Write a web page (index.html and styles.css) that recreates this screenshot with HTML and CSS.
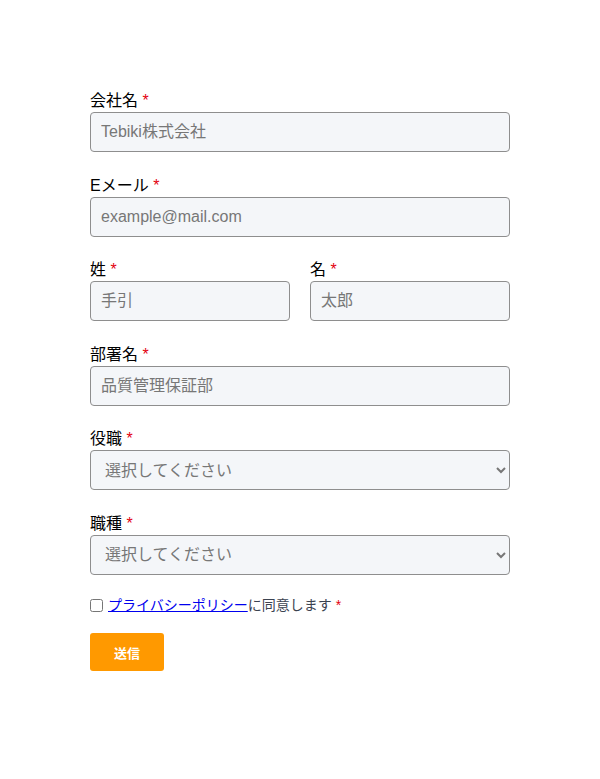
FILE: index.html
```html
<!DOCTYPE html>
<html lang="ja">
<head>
<meta charset="utf-8">
<title>フォーム</title>
<link rel="stylesheet" href="styles.css">
</head>
<body>
<form class="form">
  <div class="group">
    <label class="label">会社名 <span class="req">*</span></label>
    <input class="input" type="text" placeholder="Tebiki株式会社">
  </div>
  <div class="group">
    <label class="label">Eメール <span class="req">*</span></label>
    <input class="input" type="email" placeholder="example@mail.com">
  </div>
  <div class="row">
    <div class="group">
      <label class="label">姓 <span class="req">*</span></label>
      <input class="input" type="text" placeholder="手引">
    </div>
    <div class="group">
      <label class="label">名 <span class="req">*</span></label>
      <input class="input" type="text" placeholder="太郎">
    </div>
  </div>
  <div class="group">
    <label class="label">部署名 <span class="req">*</span></label>
    <input class="input" type="text" placeholder="品質管理保証部">
  </div>
  <div class="group">
    <label class="label">役職 <span class="req">*</span></label>
    <select class="input select"><option>選択してください</option></select>
  </div>
  <div class="group">
    <label class="label">職種 <span class="req">*</span></label>
    <select class="input select"><option>選択してください</option></select>
  </div>
  <div class="agree">
    <input class="check" type="checkbox">
    <span><a class="link" href="#">プライバシーポリシー</a>に同意します <span class="req">*</span></span>
  </div>
  <button class="submit" type="button">送信</button>
</form>
</body>
</html>
```
FILE: styles.css
```css
html, body {
  margin: 0;
  padding: 0;
  background: #fff;
}
body {
  font-family: "Liberation Sans", "Noto Sans CJK JP", sans-serif;
  color: #000;
}
.form {
  width: 420px;
  margin: 0 auto;
  padding-top: 87px;
}
.group {
  display: flex;
  flex-direction: column;
  margin-bottom: 19.5px;
}
.row {
  display: grid;
  grid-template-columns: 1fr 1fr;
  column-gap: 20px;
}
.label {
  font-size: 16px;
  line-height: 22px;
  padding-top: 3px;
}
.req {
  color: #e3000f;
}
.input {
  box-sizing: border-box;
  height: 40px;
  width: 100%;
  padding: 0 10px;
  font-family: "Liberation Sans", "Noto Sans CJK JP", sans-serif;
  font-size: 16px;
  background: #f4f6f9;
  border: 1px solid #8e8e8e;
  border-radius: 4px;
  color: #333;
  margin: 0;
}
.input::placeholder {
  color: #777;
}
.select {
  color: #777;
}
.agree {
  display: flex;
  align-items: center;
  font-size: 14px;
  line-height: 22px;
  color: #3b4250;
}
.check {
  width: 13px;
  height: 13px;
  margin: 0 5px 0 0;
}
.link {
  color: #0000ee;
}
.submit {
  margin-top: 17px;
  width: 74px;
  height: 38px;
  background: #ff9900;
  color: #fff;
  border: none;
  border-radius: 3px;
  font-family: "Liberation Sans", "Noto Sans CJK JP", sans-serif;
  font-size: 13px;
  font-weight: bold;
  padding: 0;
}
```
